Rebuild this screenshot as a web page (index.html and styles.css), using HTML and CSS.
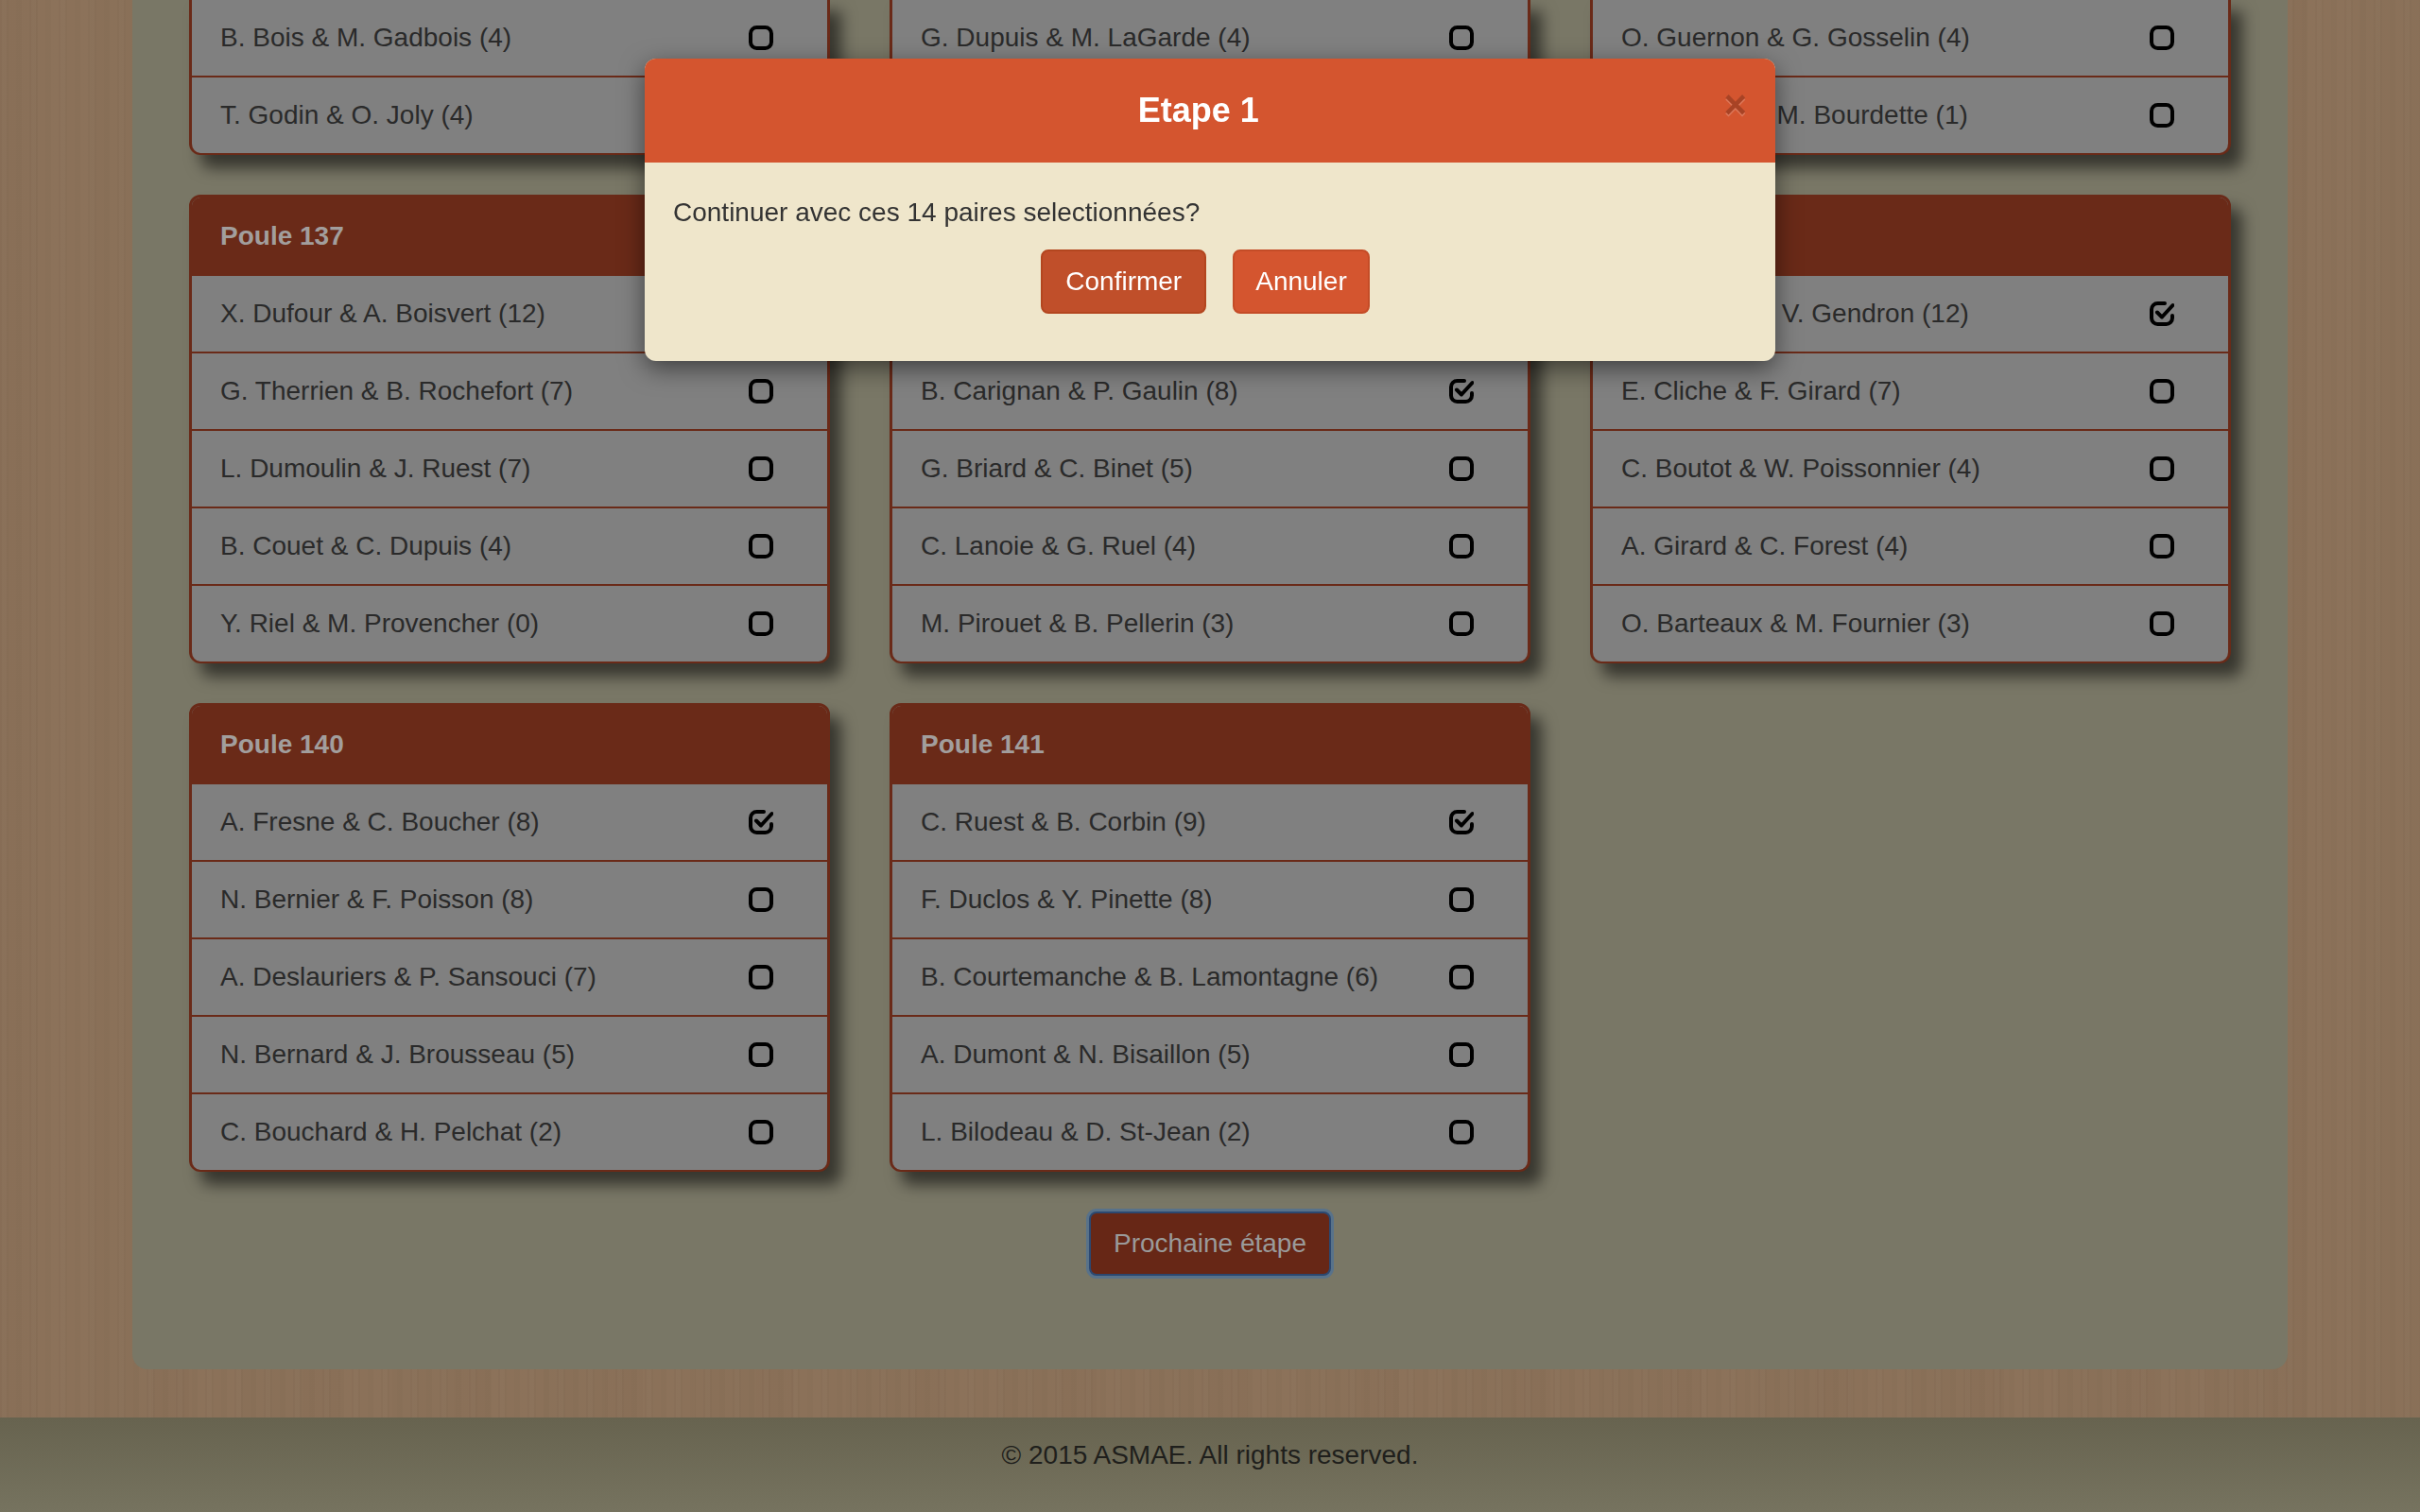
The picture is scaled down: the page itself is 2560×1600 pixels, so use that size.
FILE: index.html
```html
<!DOCTYPE html>
<html lang="fr">
<head>
<meta charset="utf-8">
<title>ASMAE - Etape 1</title>
<link rel="stylesheet" href="styles.css">
</head>
<body>
<main class="panel">
  <div class="grid">
    <section class="card card--cont">
      <div class="row"><span>B. Bois &amp; M. Gadbois (4)</span><svg class="ico" viewBox="0 0 26 26"><rect x="2" y="2" width="22" height="22" rx="6.5"/></svg></div>
      <div class="row"><span>T. Godin &amp; O. Joly (4)</span><svg class="ico" viewBox="0 0 26 26"><rect x="2" y="2" width="22" height="22" rx="6.5"/></svg></div>
    </section>
    <section class="card card--cont">
      <div class="row"><span>G. Dupuis &amp; M. LaGarde (4)</span><svg class="ico" viewBox="0 0 26 26"><rect x="2" y="2" width="22" height="22" rx="6.5"/></svg></div>
      <div class="row"><span>R. Caron &amp; L. Morin (2)</span><svg class="ico" viewBox="0 0 26 26"><rect x="2" y="2" width="22" height="22" rx="6.5"/></svg></div>
    </section>
    <section class="card card--cont">
      <div class="row"><span>O. Guernon &amp; G. Gosselin (4)</span><svg class="ico" viewBox="0 0 26 26"><rect x="2" y="2" width="22" height="22" rx="6.5"/></svg></div>
      <div class="row"><span>P. Gagnon &amp; M. Bourdette (1)</span><svg class="ico" viewBox="0 0 26 26"><rect x="2" y="2" width="22" height="22" rx="6.5"/></svg></div>
    </section>

    <section class="card">
      <header class="card-head">Poule 137</header>
      <div class="row"><span>X. Dufour &amp; A. Boisvert (12)</span><svg class="ico" viewBox="0 0 26 26"><path d="M16 2H8.5A6.5 6.5 0 0 0 2 8.5v9A6.5 6.5 0 0 0 8.5 24h9a6.5 6.5 0 0 0 6.5-6.5V15"/><path d="M8 11.5l5 5L24.5 4"/></svg></div>
      <div class="row"><span>G. Therrien &amp; B. Rochefort (7)</span><svg class="ico" viewBox="0 0 26 26"><rect x="2" y="2" width="22" height="22" rx="6.5"/></svg></div>
      <div class="row"><span>L. Dumoulin &amp; J. Ruest (7)</span><svg class="ico" viewBox="0 0 26 26"><rect x="2" y="2" width="22" height="22" rx="6.5"/></svg></div>
      <div class="row"><span>B. Couet &amp; C. Dupuis (4)</span><svg class="ico" viewBox="0 0 26 26"><rect x="2" y="2" width="22" height="22" rx="6.5"/></svg></div>
      <div class="row"><span>Y. Riel &amp; M. Provencher (0)</span><svg class="ico" viewBox="0 0 26 26"><rect x="2" y="2" width="22" height="22" rx="6.5"/></svg></div>
    </section>
    <section class="card">
      <header class="card-head">Poule 138</header>
      <div class="row"><span>D. Roy &amp; J. Côté (10)</span><svg class="ico" viewBox="0 0 26 26"><path d="M16 2H8.5A6.5 6.5 0 0 0 2 8.5v9A6.5 6.5 0 0 0 8.5 24h9a6.5 6.5 0 0 0 6.5-6.5V15"/><path d="M8 11.5l5 5L24.5 4"/></svg></div>
      <div class="row"><span>B. Carignan &amp; P. Gaulin (8)</span><svg class="ico" viewBox="0 0 26 26"><path d="M16 2H8.5A6.5 6.5 0 0 0 2 8.5v9A6.5 6.5 0 0 0 8.5 24h9a6.5 6.5 0 0 0 6.5-6.5V15"/><path d="M8 11.5l5 5L24.5 4"/></svg></div>
      <div class="row"><span>G. Briard &amp; C. Binet (5)</span><svg class="ico" viewBox="0 0 26 26"><rect x="2" y="2" width="22" height="22" rx="6.5"/></svg></div>
      <div class="row"><span>C. Lanoie &amp; G. Ruel (4)</span><svg class="ico" viewBox="0 0 26 26"><rect x="2" y="2" width="22" height="22" rx="6.5"/></svg></div>
      <div class="row"><span>M. Pirouet &amp; B. Pellerin (3)</span><svg class="ico" viewBox="0 0 26 26"><rect x="2" y="2" width="22" height="22" rx="6.5"/></svg></div>
    </section>
    <section class="card">
      <header class="card-head">Poule 139</header>
      <div class="row"><span>S. Pelletier &amp; V. Gendron (12)</span><svg class="ico" viewBox="0 0 26 26"><path d="M16 2H8.5A6.5 6.5 0 0 0 2 8.5v9A6.5 6.5 0 0 0 8.5 24h9a6.5 6.5 0 0 0 6.5-6.5V15"/><path d="M8 11.5l5 5L24.5 4"/></svg></div>
      <div class="row"><span>E. Cliche &amp; F. Girard (7)</span><svg class="ico" viewBox="0 0 26 26"><rect x="2" y="2" width="22" height="22" rx="6.5"/></svg></div>
      <div class="row"><span>C. Boutot &amp; W. Poissonnier (4)</span><svg class="ico" viewBox="0 0 26 26"><rect x="2" y="2" width="22" height="22" rx="6.5"/></svg></div>
      <div class="row"><span>A. Girard &amp; C. Forest (4)</span><svg class="ico" viewBox="0 0 26 26"><rect x="2" y="2" width="22" height="22" rx="6.5"/></svg></div>
      <div class="row"><span>O. Barteaux &amp; M. Fournier (3)</span><svg class="ico" viewBox="0 0 26 26"><rect x="2" y="2" width="22" height="22" rx="6.5"/></svg></div>
    </section>

    <section class="card">
      <header class="card-head">Poule 140</header>
      <div class="row"><span>A. Fresne &amp; C. Boucher (8)</span><svg class="ico" viewBox="0 0 26 26"><path d="M16 2H8.5A6.5 6.5 0 0 0 2 8.5v9A6.5 6.5 0 0 0 8.5 24h9a6.5 6.5 0 0 0 6.5-6.5V15"/><path d="M8 11.5l5 5L24.5 4"/></svg></div>
      <div class="row"><span>N. Bernier &amp; F. Poisson (8)</span><svg class="ico" viewBox="0 0 26 26"><rect x="2" y="2" width="22" height="22" rx="6.5"/></svg></div>
      <div class="row"><span>A. Deslauriers &amp; P. Sansouci (7)</span><svg class="ico" viewBox="0 0 26 26"><rect x="2" y="2" width="22" height="22" rx="6.5"/></svg></div>
      <div class="row"><span>N. Bernard &amp; J. Brousseau (5)</span><svg class="ico" viewBox="0 0 26 26"><rect x="2" y="2" width="22" height="22" rx="6.5"/></svg></div>
      <div class="row"><span>C. Bouchard &amp; H. Pelchat (2)</span><svg class="ico" viewBox="0 0 26 26"><rect x="2" y="2" width="22" height="22" rx="6.5"/></svg></div>
    </section>
    <section class="card">
      <header class="card-head">Poule 141</header>
      <div class="row"><span>C. Ruest &amp; B. Corbin (9)</span><svg class="ico" viewBox="0 0 26 26"><path d="M16 2H8.5A6.5 6.5 0 0 0 2 8.5v9A6.5 6.5 0 0 0 8.5 24h9a6.5 6.5 0 0 0 6.5-6.5V15"/><path d="M8 11.5l5 5L24.5 4"/></svg></div>
      <div class="row"><span>F. Duclos &amp; Y. Pinette (8)</span><svg class="ico" viewBox="0 0 26 26"><rect x="2" y="2" width="22" height="22" rx="6.5"/></svg></div>
      <div class="row"><span>B. Courtemanche &amp; B. Lamontagne (6)</span><svg class="ico" viewBox="0 0 26 26"><rect x="2" y="2" width="22" height="22" rx="6.5"/></svg></div>
      <div class="row"><span>A. Dumont &amp; N. Bisaillon (5)</span><svg class="ico" viewBox="0 0 26 26"><rect x="2" y="2" width="22" height="22" rx="6.5"/></svg></div>
      <div class="row"><span>L. Bilodeau &amp; D. St-Jean (2)</span><svg class="ico" viewBox="0 0 26 26"><rect x="2" y="2" width="22" height="22" rx="6.5"/></svg></div>
    </section>
  </div>
  <div class="actions"><button class="btn-next" type="button">Prochaine étape</button></div>
</main>
<footer class="footer">© 2015 ASMAE. All rights reserved.</footer>

<div class="modal" role="dialog">
  <div class="modal-header">
    <h4 class="modal-title">Etape 1</h4>
    <button class="close" type="button">×</button>
  </div>
  <div class="modal-body">
    <p>Continuer avec ces 14 paires selectionnées?</p>
    <div class="modal-actions">
      <button class="btn btn-confirm" type="button">Confirmer</button>
      <button class="btn btn-cancel" type="button">Annuler</button>
    </div>
  </div>
</div>
</body>
</html>
```
FILE: styles.css
```css
html, body {
  margin: 0;
  padding: 0;
}

body {
  width: 2560px;
  height: 1600px;
  overflow: hidden;
  font-family: "Liberation Sans", Arial, Helvetica, sans-serif;
  background-color: #8a7058;
  background-image:
    repeating-linear-gradient(90deg,
      rgba(0,0,0,0.016) 0 2px,
      rgba(255,255,255,0.01) 2px 7px,
      rgba(0,0,0,0.02) 7px 9px,
      rgba(255,255,255,0) 9px 17px,
      rgba(0,0,0,0.012) 17px 23px,
      rgba(255,255,255,0.008) 23px 31px),
    repeating-linear-gradient(90deg,
      rgba(0,0,0,0.008) 0 40px,
      rgba(255,255,255,0.006) 40px 95px,
      rgba(0,0,0,0.004) 95px 160px);
}

.panel {
  width: 2280px;
  margin: 0 auto;
  box-sizing: border-box;
  padding: 0 60px 99px;
  background: #797766;
  border-radius: 0 0 16px 16px;
}

.grid {
  display: grid;
  grid-template-columns: repeat(3, 678px);
  column-gap: 63px;
  row-gap: 42px;
  align-items: start;
  margin-top: -2px;
}

.card {
  border: 3px solid #6a2a18;
  border-bottom-width: 2px;
  border-radius: 12px;
  background: #808080;
  overflow: hidden;
  box-shadow: 12px 14px 16px rgba(0, 0, 0, 0.55);
}

.card--cont {
  border-top: 0;
  border-radius: 0 0 12px 12px;
}

.card-head {
  height: 81px;
  padding: 0 30px;
  display: flex;
  align-items: center;
  background: #6a2a18;
  color: #a29e9d;
  font-size: 28px;
  font-weight: bold;
}

.row {
  height: 80px;
  border-top: 2px solid #6a2a18;
  padding: 0 57px 0 30px;
  display: flex;
  align-items: center;
  justify-content: space-between;
  font-size: 28px;
  color: #2a2a2a;
}

.ico {
  width: 26px;
  height: 26px;
  flex: none;
  fill: none;
  stroke: #000;
  stroke-width: 4;
  stroke-linecap: round;
  stroke-linejoin: round;
}

.actions {
  display: flex;
  justify-content: center;
  margin-top: 42px;
}

.btn-next {
  font-family: inherit;
  font-size: 28px;
  line-height: 40px;
  padding: 12px 24px;
  color: #9a9a9a;
  background: #672716;
  border: 2px solid #2c4870;
  border-radius: 8px;
  box-shadow: 0 0 0 3px rgba(80, 112, 148, 0.8);
}

.footer {
  margin-top: 51px;
  height: 100px;
  box-sizing: border-box;
  padding-top: 20px;
  text-align: center;
  font-size: 28px;
  line-height: 40px;
  color: #1f1f1c;
  background: linear-gradient(#67634f, #76735f);
}

.modal {
  position: fixed;
  top: 62px;
  left: 50%;
  width: 1196px;
  transform: translateX(-50%);
  border-radius: 12px;
  overflow: hidden;
  background: #efe6cb;
  box-shadow: 0 8px 26px rgba(0, 0, 0, 0.5);
}

.modal-header {
  display: flex;
  align-items: flex-start;
  padding: 30px;
  background: #d4552f;
}

.modal-title {
  flex: 1;
  margin: 0;
  text-align: center;
  font-size: 36px;
  line-height: 50px;
  font-weight: bold;
  color: #fff;
}

.close {
  margin-top: -2px;
  padding: 0;
  border: 0;
  background: none;
  font-family: inherit;
  font-size: 42px;
  line-height: 1;
  font-weight: bold;
  color: #000;
  opacity: 0.2;
  text-shadow: 0 2px 0 #fff;
}

.modal-body {
  padding: 33px 30px 50px;
}

.modal-body p {
  margin: 0 0 19px;
  font-size: 28px;
  line-height: 40px;
  color: #333;
}

.modal-actions {
  display: flex;
  justify-content: center;
  gap: 28px;
  padding-right: 10px;
}

.btn {
  font-family: inherit;
  font-size: 28px;
  line-height: 40px;
  padding: 12px 24px;
  color: #fff;
  border: 2px solid #c04d28;
  border-radius: 8px;
}

.btn-confirm {
  background: #c04f2a;
  border-color: #b3461f;
}

.btn-cancel {
  padding: 12px 22px;
  background: #d4552f;
  border-color: #c44c27;
}
```
